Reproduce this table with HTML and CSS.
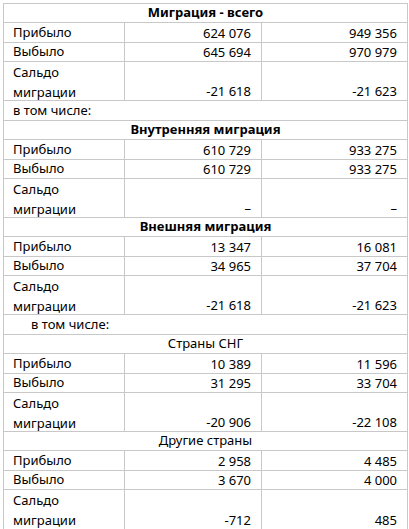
FILE: index.html
```html
<!DOCTYPE html>
<html lang="ru">
<head>
<meta charset="utf-8">
<title>Миграция</title>
<link rel="stylesheet" href="styles.css">
</head>
<body>
<div class="sheet">
  <div class="c span head">Миграция - всего</div>
  <div class="c">Прибыло</div><div class="c num">624 076</div><div class="c num">949 356</div>
  <div class="c">Выбыло</div><div class="c num">645 694</div><div class="c num">970 979</div>
  <div class="c wrap">Сальдо<br>миграции</div><div class="c num">-21 618</div><div class="c num">-21 623</div>
  <div class="c span">в том числе:</div>

  <div class="c span head">Внутренняя миграция</div>
  <div class="c">Прибыло</div><div class="c num">610 729</div><div class="c num">933 275</div>
  <div class="c">Выбыло</div><div class="c num">610 729</div><div class="c num">933 275</div>
  <div class="c wrap">Сальдо<br>миграции</div><div class="c num">–</div><div class="c num">–</div>

  <div class="c span head">Внешняя миграция</div>
  <div class="c">Прибыло</div><div class="c num">13 347</div><div class="c num">16 081</div>
  <div class="c">Выбыло</div><div class="c num">34 965</div><div class="c num">37 704</div>
  <div class="c wrap">Сальдо<br>миграции</div><div class="c num">-21 618</div><div class="c num">-21 623</div>
  <div class="c span indent">в том числе:</div>

  <div class="c span sub">Страны СНГ</div>
  <div class="c">Прибыло</div><div class="c num">10 389</div><div class="c num">11 596</div>
  <div class="c">Выбыло</div><div class="c num">31 295</div><div class="c num">33 704</div>
  <div class="c wrap">Сальдо<br>миграции</div><div class="c num">-20 906</div><div class="c num">-22 108</div>

  <div class="c span sub">Другие страны</div>
  <div class="c">Прибыло</div><div class="c num">2 958</div><div class="c num">4 485</div>
  <div class="c">Выбыло</div><div class="c num">3 670</div><div class="c num">4 000</div>
  <div class="c wrap">Сальдо<br>миграции</div><div class="c num">-712</div><div class="c num">485</div>
</div>
</body>
</html>
```

FILE: styles.css
```css
html, body {
  margin: 0;
  padding: 0;
  background: #ffffff;
}

body {
  font-family: "Noto Sans", "Open Sans", sans-serif;
  font-size: 13px;
  color: #000000;
  height: 529px;
  overflow: hidden;
}

.sheet {
  margin: 3px 0 0 3px;
  width: 403px;
  display: grid;
  grid-template-columns: 120px 136px 145px;
  grid-template-rows:
    18px 19px 18px 38px 19px
    18px 19px 18px 38px
    18px 19px 18px 38px 19px
    18px 19px 18px 38px
    18px 19px 18px 39px;
  gap: 1px;
  padding: 1px;
  background: #c8c8c8;
}

.c {
  background: #ffffff;
  display: flex;
  align-items: flex-end;
  padding: 0 9px 1px 9px;
  line-height: 18px;
  white-space: nowrap;
  min-height: 0;
}

.wrap {
  display: block;
  align-self: end;
  padding-bottom: 0;
  line-height: 20px;
  height: 100%;
  box-sizing: border-box;
  padding-top: 0;
}

.num {
  justify-content: flex-end;
  padding-right: 10px;
  padding-bottom: 0;
}

.span {
  grid-column: 1 / 4;
}

.head {
  justify-content: center;
  font-weight: bold;
}

.sub {
  justify-content: center;
}

.indent {
  padding-left: 27px;
}
```
